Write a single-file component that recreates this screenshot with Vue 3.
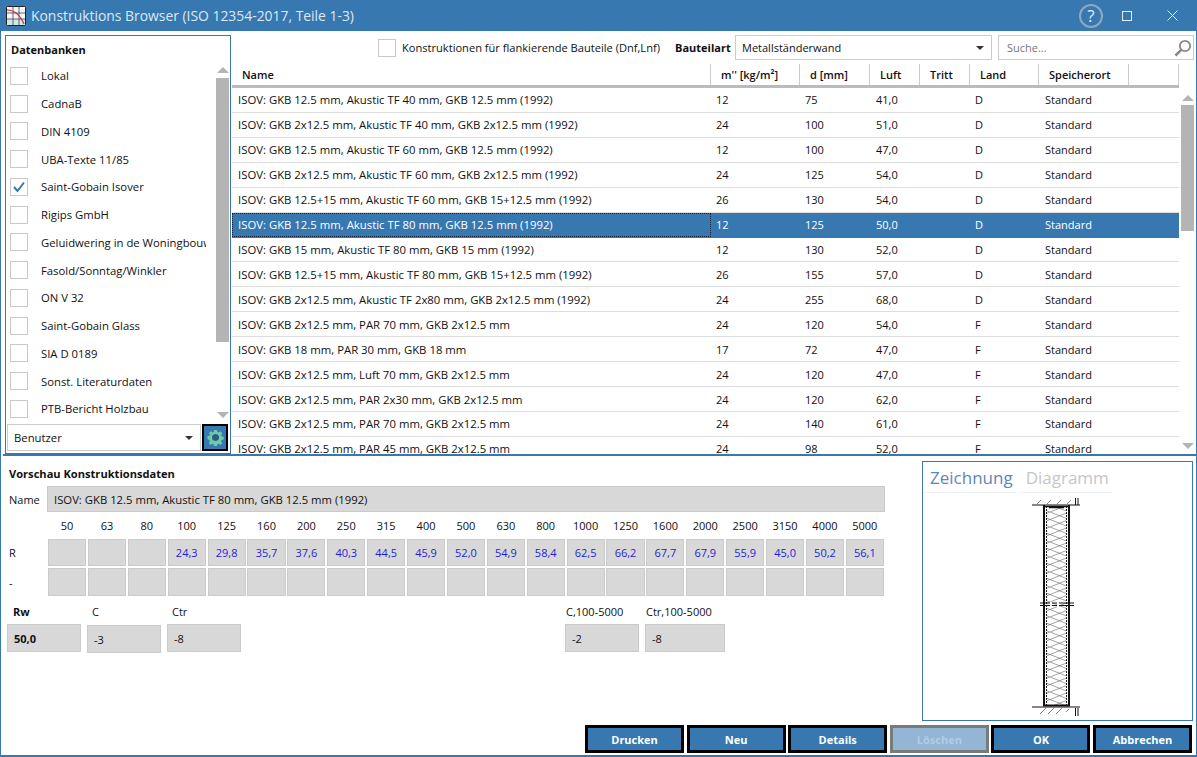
<template>
  <div class="window">
    <header class="titlebar">
      <svg class="app-icon" width="20" height="20" viewBox="0 0 20 20">
        <rect x="0.5" y="0.5" width="19" height="19" rx="1" fill="#f4f7f7" stroke="#222" />
        <rect x="1" y="13" width="18" height="6" fill="#cfeae4" />
        <path d="M1 7h18M1 13h18M7 1v18M13 1v18" stroke="#445" stroke-width="0.8" fill="none" />
        <path d="M1 4C8 4 14 9 18 18" stroke="#d6243a" stroke-width="1.2" fill="none" />
      </svg>
      <span class="title">Konstruktions Browser (ISO 12354-2017, Teile 1-3)</span>
      <span class="help">?</span>
      <svg class="win-btn max" width="10" height="10" viewBox="0 0 10 10">
        <rect x="0.5" y="0.5" width="9" height="9" fill="none" stroke="#e6eef5" />
      </svg>
      <svg class="win-btn close" width="11" height="11" viewBox="0 0 11 11">
        <path d="M0.5 0.5l10 10M10.5 0.5l-10 10" fill="none" stroke="#e6eef5" />
      </svg>
    </header>

    <section class="upper">
      <aside class="db-panel">
        <h3 class="db-title">Datenbanken</h3>
        <div class="db-body">
          <ul class="db-list">
            <li v-for="db in databases" :key="db.name">
              <span class="check">
                <svg v-if="db.checked" width="16" height="16" viewBox="0 0 16 16">
                  <path d="M3 8l3.5 4L13 3.5" fill="none" stroke="#3778b0" stroke-width="2" />
                </svg>
              </span>
              <span class="db-name">{{ db.name }}</span>
            </li>
          </ul>
          <div class="scrollbar db-scroll">
            <i class="arrow-up"></i>
            <i class="thumb"></i>
            <i class="arrow-down"></i>
          </div>
        </div>
        <div class="db-foot">
          <div class="select user-select">Benutzer<i class="caret"></i></div>
          <button class="gear-btn">
            <svg width="17" height="17" viewBox="0 0 18 18">
              <path
                fill="#6fc9ac"
                fill-rule="evenodd"
                d="M7.5 1h3l.4 2.2 1.3.6L14.100 2.500l2.100 2.100-1.300 1.900.6 1.300 2.200.4v3l-2.200.4-.6 1.300 1.300 1.900-2.100 2.100-1.900-1.300-1.300.6-.4 2.200h-3l-.4-2.200-1.300-.6-1.900 1.300-2.100-2.100 1.300-1.900-.6-1.300L.5 10.500v-3l2.200-.4.6-1.300L2 4.600l2.100-2.100L6 3.800l1.300-.6zM9 5.500a3.500 3.500 0 1 0 0 7 3.500 3.500 0 0 0 0-7z"
              />
              <circle cx="9" cy="9" r="3.500" fill="#2a5f78" />
            </svg>
          </button>
        </div>
      </aside>

      <div class="browser">
        <div class="toolbar">
          <span class="check"></span>
          <span class="flank">Konstruktionen für flankierende Bauteile (Dnf,Lnf)</span>
          <b class="part-label">Bauteilart</b>
          <div class="select part-select">Metallständerwand<i class="caret"></i></div>
          <div class="search">
            <span>Suche...</span>
            <svg width="20" height="20" viewBox="0 0 20 20">
              <circle cx="12" cy="8" r="5.200" fill="none" stroke="#888" stroke-width="1.800" />
              <path d="M8.200 11.800L2.500 17.500" stroke="#888" stroke-width="2.600" />
            </svg>
          </div>
        </div>

        <div class="table-head">
          <div v-for="h in headers" :key="h" class="th">{{ h }}</div>
        </div>

        <div class="table-wrap">
          <div class="rows">
            <div
              v-for="(row, i) in rows"
              :key="i"
              class="row"
              :class="{ selected: i === 5 }"
            >
              <span class="cell-name">{{ row[0] }}</span>
              <span>{{ row[1] }}</span>
              <span>{{ row[2] }}</span>
              <span>{{ row[3] }}</span>
              <span></span>
              <span>{{ row[4] }}</span>
              <span>Standard</span>
            </div>
          </div>
          <div class="scrollbar table-scroll">
            <i class="arrow-up"></i>
            <i class="thumb"></i>
            <i class="arrow-down"></i>
          </div>
        </div>
      </div>
    </section>

    <section class="lower">
      <div class="preview">
        <h3 class="preview-title">Vorschau Konstruktionsdaten</h3>
        <div class="name-row">
          <span class="name-label">Name</span>
          <div class="field name-field">ISOV: GKB 12.5 mm, Akustic TF 80 mm, GKB 12.5 mm (1992)</div>
        </div>

        <div class="freq-grid">
          <span></span>
          <span v-for="f in freqs" :key="f" class="freq">{{ f }}</span>
          <span class="row-label">R</span>
          <div v-for="(v, i) in rValues" :key="'r' + i" class="field band">{{ v }}</div>
          <span class="row-label">-</span>
          <div v-for="f in freqs" :key="'d' + f" class="field band"></div>
        </div>

        <div class="ratings">
          <div class="rating rw">
            <b>Rw</b>
            <div class="field value bold">50,0</div>
          </div>
          <div class="rating c">
            <span>C</span>
            <div class="field value">-3</div>
          </div>
          <div class="rating ctr">
            <span>Ctr</span>
            <div class="field value">-8</div>
          </div>
          <div class="rating c100">
            <span>C,100-5000</span>
            <div class="field value">-2</div>
          </div>
          <div class="rating ctr100">
            <span>Ctr,100-5000</span>
            <div class="field value">-8</div>
          </div>
        </div>
      </div>

      <div class="side">
        <div class="drawing-box">
          <div class="tabs">
            <span class="tab active">Zeichnung</span>
            <span class="tab">Diagramm</span>
          </div>
          <svg class="wall" width="60" height="224" viewBox="0 0 60 224">
            <defs>
              <pattern id="zig" width="19" height="15" patternUnits="userSpaceOnUse">
                <path d="M0 0L19 7.500L0 15M19 0L0 7.500L19 15" fill="none" stroke="#666" stroke-width="0.600" />
              </pattern>
            </defs>
            <path d="M6 7l4-4M16 7l4-4M26 7l4-4M36 7l4-4" stroke="#555" stroke-width="0.700" />
            <path d="M1 8h48M44.500 1v7M47 1v7" stroke="#111" stroke-width="1" />
            <rect x="16" y="10" width="19" height="198" fill="url(#zig)" />
            <path d="M13 8v201M38 8v201" stroke="#111" stroke-width="2" />
            <path d="M15.500 9v200M35.500 9v200" stroke="#222" stroke-width="1" stroke-dasharray="2 1" />
            <path d="M13 9.500h25M18 10.500h15" stroke="#111" stroke-width="1.300" />
            <path d="M9 106h34M9 108.500h34" stroke="#111" stroke-width="1.200" />
            <rect x="19" y="105" width="2" height="5" fill="#fff" />
            <rect x="26" y="105" width="2" height="5" fill="#fff" />
            <path d="M12 208.500h27" stroke="#111" stroke-width="2" />
            <path d="M1 210h48M44.500 211v8M47 211v8" stroke="#111" stroke-width="1" />
            <path d="M9 217l6-6M17 217l6-6M25 217l6-6M35 215l3-3" stroke="#555" stroke-width="0.700" />
          </svg>
        </div>
      </div>

      <div class="actions">
        <button class="action">Drucken</button>
        <button class="action">Neu</button>
        <button class="action">Details</button>
        <button class="action disabled">Löschen</button>
        <button class="action">OK</button>
        <button class="action">Abbrechen</button>
      </div>
    </section>
  </div>
</template>

<script setup>
const databases = [
  { name: "Lokal" },
  { name: "CadnaB" },
  { name: "DIN 4109" },
  { name: "UBA-Texte 11/85" },
  { name: "Saint-Gobain Isover", checked: true },
  { name: "Rigips GmbH" },
  { name: "Geluidwering in de Woningbouw" },
  { name: "Fasold/Sonntag/Winkler" },
  { name: "ON V 32" },
  { name: "Saint-Gobain Glass" },
  { name: "SIA D 0189" },
  { name: "Sonst. Literaturdaten" },
  { name: "PTB-Bericht Holzbau" },
];

const headers = ["Name", "m'' [kg/m²]", "d [mm]", "Luft", "Tritt", "Land", "Speicherort", ""];

const rows = [
  ["ISOV: GKB 12.5 mm, Akustic TF 40 mm, GKB 12.5 mm (1992)", "12", "75", "41,0", "D"],
  ["ISOV: GKB 2x12.5 mm, Akustic TF 40 mm, GKB 2x12.5 mm (1992)", "24", "100", "51,0", "D"],
  ["ISOV: GKB 12.5 mm, Akustic TF 60 mm, GKB 12.5 mm (1992)", "12", "100", "47,0", "D"],
  ["ISOV: GKB 2x12.5 mm, Akustic TF 60 mm, GKB 2x12.5 mm (1992)", "24", "125", "54,0", "D"],
  ["ISOV: GKB 12.5+15 mm, Akustic TF 60 mm, GKB 15+12.5 mm (1992)", "26", "130", "54,0", "D"],
  ["ISOV: GKB 12.5 mm, Akustic TF 80 mm, GKB 12.5 mm (1992)", "12", "125", "50,0", "D"],
  ["ISOV: GKB 15 mm, Akustic TF 80 mm, GKB 15 mm (1992)", "12", "130", "52,0", "D"],
  ["ISOV: GKB 12.5+15 mm, Akustic TF 80 mm, GKB 15+12.5 mm (1992)", "26", "155", "57,0", "D"],
  ["ISOV: GKB 2x12.5 mm, Akustic TF 2x80 mm, GKB 2x12.5 mm (1992)", "24", "255", "68,0", "D"],
  ["ISOV: GKB 2x12.5 mm, PAR 70 mm, GKB 2x12.5 mm", "24", "120", "54,0", "F"],
  ["ISOV: GKB 18 mm, PAR 30 mm, GKB 18 mm", "17", "72", "47,0", "F"],
  ["ISOV: GKB 2x12.5 mm, Luft 70 mm, GKB 2x12.5 mm", "24", "120", "47,0", "F"],
  ["ISOV: GKB 2x12.5 mm, PAR 2x30 mm, GKB 2x12.5 mm", "24", "120", "62,0", "F"],
  ["ISOV: GKB 2x12.5 mm, PAR 70 mm, GKB 2x12.5 mm", "24", "140", "61,0", "F"],
  ["ISOV: GKB 2x12.5 mm, PAR 45 mm, GKB 2x12.5 mm", "24", "98", "52,0", "F"],
];

const freqs = [50, 63, 80, 100, 125, 160, 200, 250, 315, 400, 500, 630, 800, 1000, 1250, 1600, 2000, 2500, 3150, 4000, 5000];

const rValues = ["", "", "", "24,3", "29,8", "35,7", "37,6", "40,3", "44,5", "45,9", "52,0", "54,9", "58,4", "62,5", "66,2", "67,7", "67,9", "55,9", "45,0", "50,2", "56,1"];
</script>

<style>
html,
body {
  margin: 0;
  background: #fff;
  overflow: hidden;
}
</style>

<style scoped>
.window {
  width: 1197px;
  height: 757px;
  box-sizing: border-box;
  border-left: 1px solid #3778b0;
  border-right: 1px solid #3778b0;
  border-bottom: 2px solid #3778b0;
  display: flex;
  flex-direction: column;
  overflow: hidden;
  background: #fff;
  color: #111;
  font-family: "Open Sans", "Liberation Sans", sans-serif;
  font-size: 11.3px;
}

.titlebar {
  height: 31px;
  flex: none;
  margin: 0 -1px;
  background: #3778b0;
  display: flex;
  align-items: center;
  padding-left: 6px;
}
.app-icon {
  margin-right: 5px;
}
.title {
  flex: 1;
  color: #dce8f3;
  font-size: 13.9px;
}
.help {
  width: 24px;
  height: 24px;
  box-sizing: border-box;
  border: 2px solid #8fa9c0;
  border-radius: 50%;
  color: #e6eef5;
  font-size: 17px;
  line-height: 20px;
  text-align: center;
  margin-right: 19px;
}
.win-btn.max {
  margin-right: 35px;
}
.win-btn.close {
  margin-right: 19px;
}

.upper {
  height: 425px;
  flex: none;
  display: flex;
  border-bottom: 2px solid #3778b0;
  box-sizing: border-box;
  margin-left: 2px;
}

.db-panel {
  width: 226px;
  height: 419px;
  margin: 4px 0 0 2px;
  box-sizing: border-box;
  border: 1px solid #3778b0;
  display: flex;
  flex-direction: column;
  flex: none;
}
.db-title {
  margin: 6px 0 0 5px;
  font-size: 11px;
  font-weight: 700;
  line-height: 15px;
  color: #111;
}
.db-body {
  flex: 1;
  display: flex;
  min-height: 0;
}
.db-list {
  list-style: none;
  margin: 0;
  padding: 5px 0 0 4px;
  width: 206px;
  overflow: hidden;
  flex: none;
  box-sizing: border-box;
}
.db-list li {
  height: 27.75px;
  display: flex;
  align-items: center;
}
.db-name {
  margin-left: 13px;
  width: 165px;
  overflow: hidden;
  white-space: nowrap;
}
.check {
  width: 18px;
  height: 18px;
  box-sizing: border-box;
  border: 1px solid #c9c9c9;
  background: #fff;
  display: flex;
  align-items: center;
  justify-content: center;
  flex: none;
}

.scrollbar {
  display: flex;
  flex-direction: column;
  align-items: center;
  flex: none;
}
.thumb {
  background: #b4b4b4;
  width: 100%;
  display: block;
}
.arrow-up,
.arrow-down {
  width: 0;
  height: 0;
  border-left: 6px solid transparent;
  border-right: 6px solid transparent;
  display: block;
}
.arrow-up {
  border-bottom: 6px solid #b4b4b4;
}
.arrow-down {
  border-top: 6px solid #b4b4b4;
  margin-top: auto;
}
.db-scroll {
  width: 13px;
  margin-left: 4px;
  padding-top: 10px;
  padding-bottom: 6px;
}
.db-scroll .thumb {
  height: 264px;
  margin-top: 5px;
}

.db-foot {
  display: flex;
  align-items: stretch;
  height: 29px;
  padding: 0 1px 2px 1px;
  box-sizing: border-box;
  gap: 1px;
}
.select {
  border: 1px solid #ccc;
  box-sizing: border-box;
  background: #fff;
  position: relative;
  display: flex;
  align-items: center;
  padding-left: 6px;
  padding-bottom: 1px;
  white-space: nowrap;
}
.caret {
  position: absolute;
  right: 7px;
  top: 50%;
  margin-top: -2px;
  width: 0;
  height: 0;
  border-left: 4px solid transparent;
  border-right: 4px solid transparent;
  border-top: 4px solid #333;
}
.user-select {
  width: 194px;
}
.gear-btn {
  width: 26px;
  height: 27px;
  padding: 0;
  box-sizing: border-box;
  border: 2px solid #000;
  background: #3778b0;
  display: flex;
  align-items: center;
  justify-content: center;
}

.browser {
  flex: 1;
  min-width: 0;
  margin-left: 1px;
  display: flex;
  flex-direction: column;
}
.toolbar {
  height: 33px;
  flex: none;
  display: flex;
  align-items: center;
  box-sizing: border-box;
}
.toolbar > .check {
  margin-left: 146px;
}
.flank {
  margin-left: 6px;
  width: 273px;
  white-space: nowrap;
  font-size: 11.1px;
}
.part-label {
  width: 60px;
  font-size: 11px;
  font-weight: 700;
  color: #111;
}
.part-select {
  width: 257px;
  height: 25px;
  font-size: 11px;
}
.search {
  width: 196px;
  height: 25px;
  margin-left: 6px;
  border: 1px solid #ccc;
  box-sizing: border-box;
  display: flex;
  align-items: center;
  justify-content: space-between;
  padding: 0 0 0 8px;
  color: #777;
  font-size: 11px;
}

.table-head {
  height: 21px;
  width: 947px;
  flex: none;
  display: grid;
  grid-template-columns: 479px 89px 70px 50px 50px 69px 90px 50px;
  border-bottom: 3px solid #bbb;
  box-sizing: content-box;
}
.th {
  font-size: 11px;
  font-weight: 600;
  color: #111;
  display: flex;
  align-items: center;
  border-right: 1px solid #ccc;
  padding: 0 0 0 10px;
  white-space: nowrap;
  box-sizing: border-box;
  height: 21px;
}

.table-wrap {
  flex: 1;
  min-height: 0;
  display: flex;
}
.rows {
  width: 947px;
  flex: none;
  overflow: hidden;
}
.row {
  height: 24.93px;
  display: grid;
  grid-template-columns: 479px 89px 71px 54px 45px 70px 139px;
  align-items: center;
  border-bottom: 1px solid #ddd;
  box-sizing: border-box;
  white-space: nowrap;
}
.row > span {
  padding-left: 5px;
  font-size: 11px;
}
.row > .cell-name {
  padding-left: 6px;
  font-size: 11.35px;
}
.row > span:nth-child(5) {
  padding-left: 0;
}
.row.selected {
  background: #3778b0;
  color: #fff;
  border-bottom-color: #3778b0;
}
.row.selected .cell-name {
  outline: 1px dotted #12253a;
  outline-offset: -1px;
  height: 100%;
  display: flex;
  align-items: center;
  box-sizing: border-box;
}
.table-scroll {
  width: 13px;
  margin-left: 2px;
  padding-top: 7px;
  padding-bottom: 5px;
}
.table-scroll .thumb {
  height: 126px;
  margin-top: 4px;
}

.lower {
  flex: 1;
  min-height: 0;
  position: relative;
  display: grid;
  grid-template-columns: 920px 1fr;
  grid-template-rows: 1fr 30px;
}
.preview {
  padding-left: 6px;
}
.preview-title {
  margin: 10px 0 0 2px;
  font-size: 11.1px;
  line-height: 15px;
  font-weight: 700;
  color: #111;
}
.name-row {
  display: flex;
  align-items: center;
  margin-top: 5px;
}
.name-label {
  width: 40px;
  padding-left: 2px;
  box-sizing: border-box;
  font-size: 11px;
}
.field {
  background: #d8d8d8;
  border: 1px solid #cbcbcb;
  box-sizing: border-box;
}
.name-field {
  width: 838px;
  height: 26px;
  display: flex;
  align-items: center;
  padding-left: 6px;
}
.freq-grid {
  display: grid;
  grid-template-columns: 39.2px repeat(21, 38.1px);
  column-gap: 1.8px;
  grid-template-rows: 25px 27px 28px;
  row-gap: 2px;
  width: 880px;
  font-size: 11px;
}
.freq {
  text-align: center;
  line-height: 27px;
  height: 25px;
}
.row-label {
  align-self: center;
  padding-left: 2px;
  margin-right: -2px;
}
.band {
  color: #1f1fd6;
  text-align: center;
  line-height: 26px;
}
.ratings {
  display: flex;
  margin-top: 8px;
  position: relative;
  font-size: 11px;
}
.rating {
  width: 74px;
  margin-right: 6px;
  flex: none;
  line-height: 15px;
}
.rating > span,
.rating > b {
  display: block;
  height: 20px;
  padding-left: 5px;
  color: #111;
}
.rating.rw > b {
  padding-left: 6px;
}
.rating.c100 {
  margin-left: 318px;
}
.rating.ctr100 {
  width: 80px;
}
.rating.c100 > span,
.rating.ctr100 > span {
  padding-left: 1px;
  white-space: nowrap;
}
.value {
  height: 28px;
  display: flex;
  align-items: center;
  padding-left: 6px;
}
.rating.c .value {
  margin-top: 1px;
}
.value.bold {
  font-weight: 700;
}

.side {
  padding: 5px 0 0 1px;
  min-height: 0;
}
.drawing-box {
  width: 271px;
  height: 260px;
  box-sizing: border-box;
  border: 1px solid #3778b0;
  display: flex;
  flex-direction: column;
  align-items: center;
  position: relative;
}
.tabs {
  align-self: stretch;
  display: flex;
  height: 32px;
  flex: none;
  font-size: 17px;
  line-height: 32px;
}
.tab {
  color: #c6c6c6;
  padding: 0 3px 0 7px;
  border-bottom: 1px solid #edf1f6;
  height: 31px;
  box-sizing: border-box;
  margin-right: 3px;
}
.tab.active {
  color: #5d87b8;
}
.wall {
  position: absolute;
  left: 108px;
  top: 35px;
}

.actions {
  grid-column: 1 / 3;
  display: flex;
  justify-content: flex-end;
  gap: 2.600px;
  padding-right: 4px;
  padding-top: 0;
  height: 29px;
}
.action {
  width: 99px;
  height: 28px;
  box-sizing: border-box;
  border: 3px solid #000;
  background: #3778b0;
  color: #fff;
  font-family: inherit;
  font-size: 11px;
  font-weight: 700;
  padding: 0;
}
.action.disabled {
  border-color: #7a7a7a;
  background: #92b6d4;
  color: #b2cde2;
}
</style>
